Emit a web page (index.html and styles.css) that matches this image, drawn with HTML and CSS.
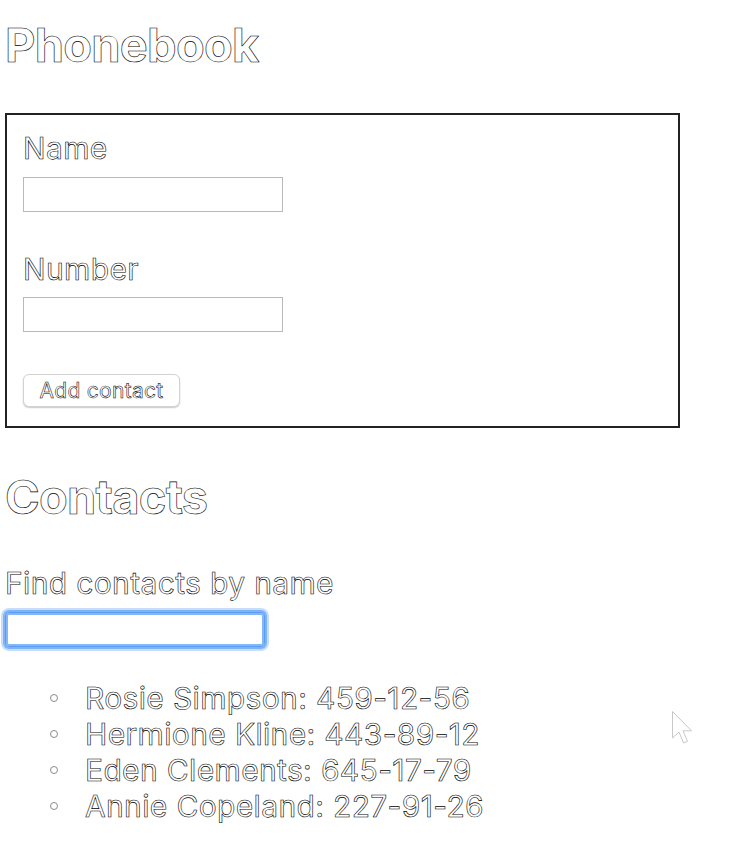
FILE: index.html
```html
<!DOCTYPE html>
<html lang="en">
<head>
<meta charset="utf-8">
<title>Phonebook</title>
<link rel="stylesheet" href="styles.css">
</head>
<body>
<div class="app">
  <h1 class="title">Phonebook</h1>
  <form class="add-form">
    <label class="field">
      <span class="label">Name</span>
      <input class="text-input" type="text">
    </label>
    <label class="field field-number">
      <span class="label">Number</span>
      <input class="text-input" type="tel">
    </label>
    <button class="btn" type="button">Add contact</button>
  </form>
  <h2 class="title title-contacts">Contacts</h2>
  <label class="field filter">
    <span class="label">Find contacts by name</span>
    <input class="text-input focused" type="text">
  </label>
  <ul class="contacts">
    <li class="contact"><span class="bullet"></span><span>Rosie Simpson: 459-12-56</span></li>
    <li class="contact"><span class="bullet"></span><span>Hermione Kline: 443-89-12</span></li>
    <li class="contact"><span class="bullet"></span><span>Eden Clements: 645-17-79</span></li>
    <li class="contact"><span class="bullet"></span><span>Annie Copeland: 227-91-26</span></li>
  </ul>
</div>
<svg class="cursor" width="22" height="36" viewBox="0 0 22 36" aria-hidden="true">
  <path d="M1.5 1.5 L1.5 28 L8 22 L12.5 33 L16.5 31.3 L12 20.8 L20.5 20.8 Z" fill="#fff" stroke="#c8c8c8" stroke-width="1" stroke-linejoin="round"/>
  <path d="M3.5 6 L3.5 23.5 L8.5 19 L13.5 30 L14.5 29.6 L9.6 18.8 L16 18.8 Z" fill="#fff" stroke="none"/>
</svg>
</body>
</html>
```
FILE: styles.css
```css
html, body {
  margin: 0;
  padding: 0;
  background: #fff;
}

body {
  font-family: Inter, "Noto Sans", sans-serif;
  font-size: 30px;
  line-height: 36px;
  letter-spacing: 0.35px;
  color: #fff;
  -webkit-text-stroke: 0.6px #000;
}

.app {
  padding: 16px 5px 0 5px;
}

.title {
  margin: 0;
  font-size: 47px;
  line-height: 57px;
  font-weight: 700;
  letter-spacing: -0.75px;
}

.add-form {
  box-sizing: border-box;
  width: 675px;
  margin: 40px 0 0 0;
  padding: 15px 16px 19px 16px;
  border: 2px solid #222;
  display: flex;
  flex-direction: column;
  align-items: flex-start;
}

.field {
  display: flex;
  flex-direction: column;
  align-items: flex-start;
  gap: 11px;
}

.field-number {
  margin-top: 39px;
  gap: 10px;
}

.label {
  display: block;
}

.text-input {
  box-sizing: border-box;
  width: 260px;
  height: 35px;
  margin: 0;
  padding: 0;
  border: 1px solid #b9b9b9;
  background: #fff;
  outline: none;
}

.btn {
  box-sizing: border-box;
  margin-top: 42px;
  width: 157px;
  height: 33px;
  padding: 0;
  border: 1px solid #d2d2d2;
  border-radius: 6px;
  background: #fff;
  box-shadow: 0 1px 1.5px rgba(0, 0, 0, 0.22);
  font-family: Inter, "Noto Sans", sans-serif;
  font-size: 21px;
  line-height: 31px;
  letter-spacing: 0.3px;
  color: #fff;
  -webkit-text-stroke: 0.55px #000;
}

.title-contacts {
  margin-top: 40px;
}

.filter {
  margin-top: 40px;
}

.text-input.focused {
  border: 1px solid #5b9cf3;
  border-radius: 4px;
  box-shadow: inset 0 0 0 2px #84b7f8, 0 0 0 2px #7fb3f7, 0 0 0 4px rgba(160, 200, 250, 0.6);
}

.contacts {
  margin: 33px 0 0 0;
  padding: 0 0 0 45px;
  list-style: none;
}

.contact {
  display: flex;
  align-items: center;
  gap: 27px;
}

.bullet {
  box-sizing: border-box;
  flex: none;
  width: 8px;
  height: 8px;
  border: 1px solid #8a8a8a;
  border-radius: 50%;
}

.cursor {
  position: absolute;
  left: 671px;
  top: 710px;
}
```
